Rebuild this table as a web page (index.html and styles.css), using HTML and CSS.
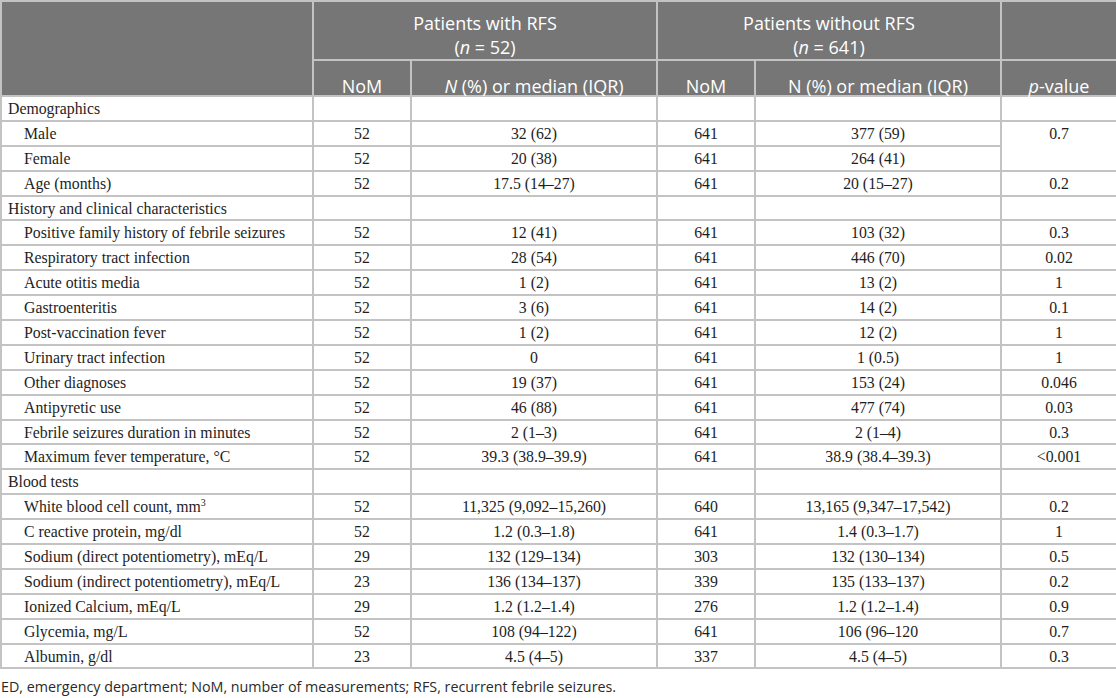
FILE: index.html
```html
<!DOCTYPE html>
<html lang="en">
<head>
    <meta charset="UTF-8">
    <title>Recurrent febrile seizures</title>
    <link rel="stylesheet" href="styles.css">
</head>
<body>

<table class="data-table">
    <colgroup>
        <col class="c-label">
        <col class="c-nom">
        <col class="c-val">
        <col class="c-nom">
        <col class="c-val">
        <col class="c-p">
    </colgroup>
    <thead>
        <tr class="head-top">
            <th rowspan="2"></th>
            <th colspan="2">Patients with RFS<br>(<i>n</i> = 52)</th>
            <th colspan="2">Patients without RFS<br>(<i>n</i> = 641)</th>
            <th></th>
        </tr>
        <tr class="head-sub">
            <th>NoM</th>
            <th><i>N</i> (%) or median (IQR)</th>
            <th>NoM</th>
            <th>N (%) or median (IQR)</th>
            <th><i>p</i>-value</th>
        </tr>
    </thead>
    <tbody>
        <tr class="section"><td>Demographics</td><td></td><td></td><td></td><td></td><td></td></tr>
        <tr><td class="sub">Male</td><td>52</td><td>32 (62)</td><td>641</td><td>377 (59)</td><td rowspan="2">0.7</td></tr>
        <tr><td class="sub">Female</td><td>52</td><td>20 (38)</td><td>641</td><td>264 (41)</td></tr>
        <tr><td class="sub">Age (months)</td><td>52</td><td>17.5 (14–27)</td><td>641</td><td>20 (15–27)</td><td>0.2</td></tr>
        <tr class="section"><td>History and clinical characteristics</td><td></td><td></td><td></td><td></td><td></td></tr>
        <tr><td class="sub">Positive family history of febrile seizures</td><td>52</td><td>12 (41)</td><td>641</td><td>103 (32)</td><td>0.3</td></tr>
        <tr><td class="sub">Respiratory tract infection</td><td>52</td><td>28 (54)</td><td>641</td><td>446 (70)</td><td>0.02</td></tr>
        <tr><td class="sub">Acute otitis media</td><td>52</td><td>1 (2)</td><td>641</td><td>13 (2)</td><td>1</td></tr>
        <tr><td class="sub">Gastroenteritis</td><td>52</td><td>3 (6)</td><td>641</td><td>14 (2)</td><td>0.1</td></tr>
        <tr><td class="sub">Post-vaccination fever</td><td>52</td><td>1 (2)</td><td>641</td><td>12 (2)</td><td>1</td></tr>
        <tr><td class="sub">Urinary tract infection</td><td>52</td><td>0</td><td>641</td><td>1 (0.5)</td><td>1</td></tr>
        <tr><td class="sub">Other diagnoses</td><td>52</td><td>19 (37)</td><td>641</td><td>153 (24)</td><td>0.046</td></tr>
        <tr><td class="sub">Antipyretic use</td><td>52</td><td>46 (88)</td><td>641</td><td>477 (74)</td><td>0.03</td></tr>
        <tr><td class="sub">Febrile seizures duration in minutes</td><td>52</td><td>2 (1–3)</td><td>641</td><td>2 (1–4)</td><td>0.3</td></tr>
        <tr><td class="sub">Maximum fever temperature, °C</td><td>52</td><td>39.3 (38.9–39.9)</td><td>641</td><td>38.9 (38.4–39.3)</td><td>&lt;0.001</td></tr>
        <tr class="section"><td>Blood tests</td><td></td><td></td><td></td><td></td><td></td></tr>
        <tr><td class="sub">White blood cell count, mm<sup>3</sup></td><td>52</td><td>11,325 (9,092–15,260)</td><td>640</td><td>13,165 (9,347–17,542)</td><td>0.2</td></tr>
        <tr><td class="sub">C reactive protein, mg/dl</td><td>52</td><td>1.2 (0.3–1.8)</td><td>641</td><td>1.4 (0.3–1.7)</td><td>1</td></tr>
        <tr><td class="sub">Sodium (direct potentiometry), mEq/L</td><td>29</td><td>132 (129–134)</td><td>303</td><td>132 (130–134)</td><td>0.5</td></tr>
        <tr><td class="sub">Sodium (indirect potentiometry), mEq/L</td><td>23</td><td>136 (134–137)</td><td>339</td><td>135 (133–137)</td><td>0.2</td></tr>
        <tr><td class="sub">Ionized Calcium, mEq/L</td><td>29</td><td>1.2 (1.2–1.4)</td><td>276</td><td>1.2 (1.2–1.4)</td><td>0.9</td></tr>
        <tr><td class="sub">Glycemia, mg/L</td><td>52</td><td>108 (94–122)</td><td>641</td><td>106 (96–120</td><td>0.7</td></tr>
        <tr><td class="sub">Albumin, g/dl</td><td>23</td><td>4.5 (4–5)</td><td>337</td><td>4.5 (4–5)</td><td>0.3</td></tr>
    </tbody>
</table>

<p class="footnote">ED, emergency department; NoM, number of measurements; RFS, recurrent febrile seizures.</p>

</body>
</html>
```

FILE: styles.css
```css
body, html {
    margin: 0;
    padding: 0;
    background: #fff;
}

/* Таблица */
.data-table {
    width: 1116px;
    table-layout: fixed;
    border-collapse: collapse;
    font-family: "Liberation Serif", "Times New Roman", serif;
    font-size: 15.8px;
    color: #1e1e1e;
}

.c-label { width: 312px; }
.c-nom { width: 98px; }
.c-val { width: 246px; }
.c-p { width: 116px; }

.data-table th,
.data-table td {
    border: 2px solid #c3c3c3;
}

/* Шапка */
.data-table th {
    background: #767676;
    color: #fff;
    font-family: "Open Sans", "Noto Sans", sans-serif;
    font-weight: normal;
    font-size: 18px;
    line-height: 24px;
    vertical-align: bottom;
    padding: 0 6px 0;
}

.head-top th {
    height: 57px;
}

.head-sub th {
    height: 34px;
    line-height: 18px;
}

/* Строки */
.data-table td {
    height: 20.9px;
    line-height: 19px;
    padding: 2px 8px 0;
    text-align: center;
    vertical-align: top;
}

.data-table td:first-child {
    text-align: left;
    padding-left: 6px;
}

.data-table td.sub {
    padding-left: 22px;
}

.data-table sup {
    font-size: 10px;
    line-height: 0;
}

.footnote {
    margin: 8px 0 0 1px;
    font-family: "Open Sans", "Noto Sans", sans-serif;
    font-size: 14.3px;
    color: #2a2a2a;
}
```
